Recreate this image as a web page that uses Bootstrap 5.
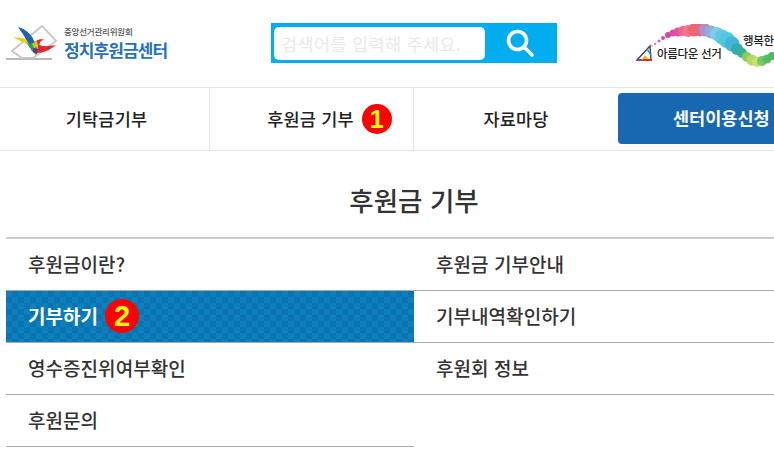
<!DOCTYPE html>
<html lang="ko">
<head>
<meta charset="utf-8">
<title>후원금 기부</title>
<link rel="stylesheet" href="https://cdn.jsdelivr.net/npm/bootstrap@5.3.0/dist/css/bootstrap.min.css">
<style>
html,body{width:774px;height:456px;overflow:hidden;background:#fff}
body{font-family:"Noto Sans CJK KR","Liberation Sans",sans-serif;color:#333}
.top-head{height:87px;position:relative}
.logo-box{width:260px;padding:24px 0 0 6px;gap:6px}
.logo-sub{font-size:8.5px;line-height:10px;color:#555;letter-spacing:-.2px;font-weight:500}
.logo-main{font-size:17px;line-height:20px;color:#2472b8;font-weight:700;letter-spacing:-.9px;margin-top:3.5px}
.search-box{position:absolute;left:271px;top:23px;width:286px;height:40px;background:#00aeef;padding:3px;gap:0}
.search-field{width:211px;height:33px;background:#fff;border-radius:5px;color:#e9e9e9;font-size:17.5px;line-height:33px;padding-left:7px;white-space:nowrap;letter-spacing:.35px}
.search-btn{flex:1}
.campaign{position:absolute;left:632px;top:24px;width:142px;height:44px;overflow:hidden}
.camp-a{position:absolute;left:25px;top:21px;font-size:11.500px;line-height:16px;font-weight:500;color:#222;letter-spacing:-.3px;white-space:nowrap}
.camp-b{position:absolute;left:111px;top:8px;font-size:11.500px;line-height:16px;font-weight:500;color:#222;letter-spacing:-.3px;white-space:nowrap}
.main-nav{height:64px;border-top:1px solid #e5e5e5;border-bottom:1px solid #e5e5e5;width:774px;overflow:hidden}
.nav-cell{height:62px;font-size:17.500px;font-weight:500;color:#222;letter-spacing:.2px;flex:none}
.c1{width:210px;border-right:1px solid #e5e5e5;padding-left:4px}
.c2{width:204px;border-right:1px solid #e5e5e5;padding-right:2px}
.c3{width:204px}
.apply-btn{flex:none;width:170px;height:51px;margin:5px 0 0;background:#1768b1;border-radius:4px;color:#fff;font-size:17.500px;font-weight:700;padding-left:55px;justify-content:flex-start;white-space:nowrap}
.label-wrap{position:relative}
.num-dot{width:30px;height:30px;border-radius:50%;background:#f00;color:#ff0;font-family:"Liberation Sans",sans-serif;font-weight:700;font-size:25px;line-height:30px;text-align:center;flex:none}
.label-wrap .num-dot{position:absolute;left:calc(100% + 8px);top:50%;margin-top:-15px}
.page-title{font-size:26.500px;line-height:34px;font-weight:500;color:#333;text-align:center;margin:0;padding:32px 0 20px;width:828px}
.menu-grid{display:grid;grid-template-columns:408px 408px;margin-left:6px;width:816px;border-top:2px solid #ccc}
.menu-item{height:52px;border-bottom:1px solid #aaa;display:flex;align-items:center;padding:0 0 2px 22px;font-size:19px;font-weight:500;color:#333;letter-spacing:.05px;gap:7px;text-decoration:none;line-height:1}
.menu-item.on{color:#fff;font-weight:700;background-color:#0b80bf;background-image:conic-gradient(#0b74b0 25%,transparent 0 50%,#0b74b0 0 75%,transparent 0);background-size:12px 12px}
.menu-item.on .num-dot{width:34px;height:34px;line-height:34px;font-size:29px}
.menu-blank{height:52px}
</style>
</head>
<body>
<header class="top-head">
  <div class="logo-box d-flex align-items-center">
    <svg width="52" height="38" viewBox="6 24 52 38" aria-hidden="true">
      <path d="M6 59H52" stroke="#b8b8b8" stroke-width="1.800"/>
      <path d="M12 51 42 26 56 41 33 58 H22Z" fill="none" stroke="#c6c6c6" stroke-width="1.800"/>
      <path d="M18 27C26 29 33 35 35 44L36 52 29 47C27 39 22 33 18 27Z" fill="#1d64ad"/>
      <path d="M13 37 25 38.500 30 45 22 42Z" fill="#f6cc12"/>
      <path d="M26 42 31 45 36 53 31 49Z" fill="#2aa24a"/>
      <path d="M30 44 36 41 38 50 36 55 31 50Z" fill="#2e9f4b"/>
      <path d="M36 41C39 39 42 39 45 40 41 40 39.500 42 39.500 45 44 47 50 46 56 45 50 50 43 53 37 53 39 49 38 45 36 41Z" fill="#e3262e"/>
      <path d="M33 48 38 49 37 54 33 52Z" fill="#6b2f90"/>
      <path d="M32 44 37 41 38 47 34 48Z" fill="#f6cc12" opacity=".8"/>
    </svg>
    <div>
      <div class="logo-sub">중앙선거관리위원회</div>
      <div class="logo-main">정치후원금센터</div>
    </div>
  </div>
  <div class="search-box d-flex align-items-center">
    <div class="search-field">검색어를 입력해 주세요.</div>
    <div class="search-btn d-flex justify-content-center align-items-center">
      <svg width="30" height="30" viewBox="0 0 30 30" aria-hidden="true"><circle cx="12.500" cy="12.500" r="9" fill="none" stroke="#fff" stroke-width="3.600"/><path d="M19.500 19.500 27 27" stroke="#fff" stroke-width="3.600" stroke-linecap="round"/></svg>
    </div>
  </div>
  <div class="campaign">
    <svg width="142" height="44" viewBox="632 24 142 44" aria-hidden="true">
      <g opacity=".85">
        <circle cx="652" cy="46" r="1" fill="#e9a0c0"/><circle cx="655" cy="44" r="1.200" fill="#e76ba0"/><circle cx="659" cy="41" r="1.500" fill="#d94f9b"/>
        <circle cx="663" cy="38" r="2" fill="#d42e92"/><circle cx="668" cy="35" r="3" fill="#c92a96"/><circle cx="673" cy="33" r="3.500" fill="#d42e92"/>
        <circle cx="678" cy="32" r="4.500" fill="#e0338e"/><circle cx="683" cy="31" r="5" fill="#e84a86"/><circle cx="688" cy="31" r="6" fill="#ec5f78"/>
        <circle cx="694" cy="30" r="6.500" fill="#ee4b5c"/><circle cx="700" cy="30" r="6.500" fill="#e84c62"/><circle cx="705" cy="30" r="6.500" fill="#9d7dc0"/>
        <circle cx="711" cy="32" r="6.500" fill="#7d9fdc"/><circle cx="717" cy="34" r="7" fill="#6cc4e8"/><circle cx="722" cy="37" r="7.500" fill="#46bdde"/>
        <circle cx="727" cy="40" r="8" fill="#30c0d8"/><circle cx="732" cy="44" r="7.500" fill="#22a8d8"/><circle cx="737" cy="49" r="6" fill="#10a0a0"/>
        <circle cx="742" cy="53" r="5" fill="#15a581"/><circle cx="747" cy="57" r="5" fill="#7cc048"/><circle cx="752" cy="60" r="5.500" fill="#a8d24a"/>
        <circle cx="757" cy="62" r="5" fill="#c4dc50"/><circle cx="762" cy="61" r="5" fill="#60bf4c"/><circle cx="767" cy="59" r="4.500" fill="#38b34a"/><circle cx="772" cy="56" r="4" fill="#2fb04a"/>
      </g>
      <path d="M637 60 650 46 651 60Z" fill="#fff" stroke="#444" stroke-width="1.400"/>
      <path d="M641 60 645 55 649 60Z" fill="#f2b90f"/>
      <path d="M637 60H642" stroke="#8a3fa0" stroke-width="2"/>
      <path d="M643 60H652" stroke="#e02b2b" stroke-width="2"/>
      <path d="M647 49 651 55" stroke="#2f8fd8" stroke-width="1.500"/>
    </svg>
    <span class="camp-a">아름다운 선거</span>
    <span class="camp-b">행복한</span>
  </div>
</header>
<nav class="main-nav d-flex">
  <div class="nav-cell c1 d-flex align-items-center justify-content-center">기탁금기부</div>
  <div class="nav-cell c2 d-flex align-items-center justify-content-center"><span class="label-wrap">후원금 기부<span class="num-dot">1</span></span></div>
  <div class="nav-cell c3 d-flex align-items-center justify-content-center">자료마당</div>
  <div class="apply-btn d-flex align-items-center">센터이용신청</div>
</nav>
<h1 class="page-title">후원금 기부</h1>
<div class="menu-grid">
  <a class="menu-item">후원금이란?</a>
  <a class="menu-item">후원금 기부안내</a>
  <a class="menu-item on"><span>기부하기</span><span class="num-dot">2</span></a>
  <a class="menu-item">기부내역확인하기</a>
  <a class="menu-item">영수증진위여부확인</a>
  <a class="menu-item">후원회 정보</a>
  <a class="menu-item">후원문의</a>
  <div class="menu-blank"></div>
</div>
<script src="https://cdn.jsdelivr.net/npm/bootstrap@5.3.0/dist/js/bootstrap.bundle.min.js"></script>
</body>
</html>
